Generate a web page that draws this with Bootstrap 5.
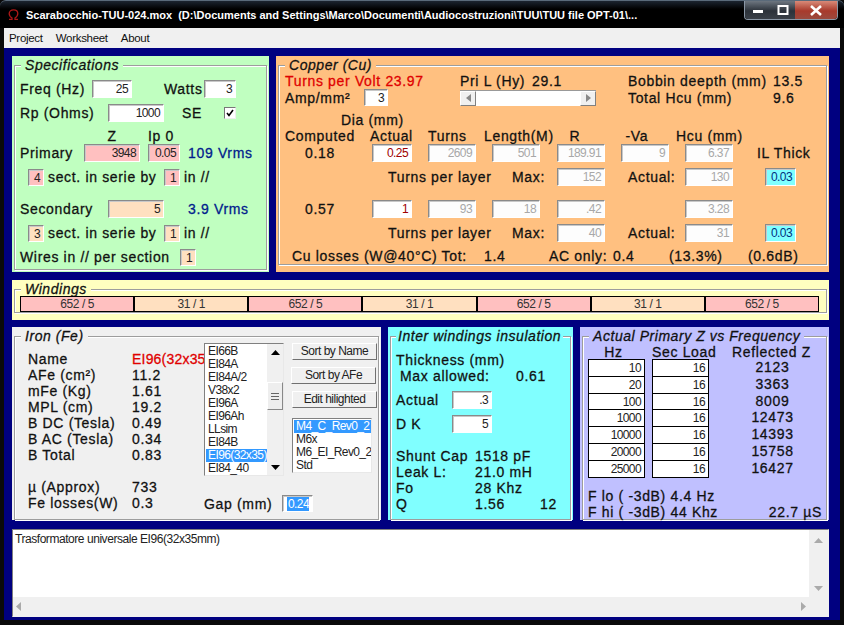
<!DOCTYPE html>
<html lang="it">
<head>
<meta charset="utf-8">
<title>Scarabocchio-TUU</title>
<link href="https://cdn.jsdelivr.net/npm/bootstrap@5.3.0/dist/css/bootstrap.min.css" rel="stylesheet">
<style>
html,body{margin:0;height:625px;overflow:hidden;background:#000}
.appwin{width:844px;height:625px;display:flex;flex-direction:column;background:#0a0a0a;font-family:"Liberation Sans",Arial,sans-serif;font-size:14px;line-height:16px;color:#111;-webkit-text-stroke:.28px currentColor;letter-spacing:.66px}
.titlebar{height:28px;flex:none;background:linear-gradient(#1c2430,#000 30%);border-top:1px solid #5a6a7a;border-radius:6px 6px 0 0;color:#fff;font-size:11px;font-weight:700;letter-spacing:0;white-space:pre;-webkit-text-stroke:0;padding-left:8px}
.capicon{width:11px;height:11px;margin-right:7px}
.capbtns{margin-left:auto;margin-right:6px;align-self:flex-start;width:94px;height:19px;display:flex;border:1px solid #8a97a6;border-top:0;border-radius:0 0 4px 4px;overflow:hidden}
.capbtns span{flex:1;display:flex;align-items:center;justify-content:center;background:linear-gradient(#6d7680,#2c323a 55%,#3a4048)}
.capbtns .xbtn{flex:1.65;background:linear-gradient(#d98a78,#a83a2c 55%,#9a4a3e)}
.menubar{height:20px;flex:none;background:#f0f0f0;margin:0 4px;font-size:11.5px;letter-spacing:-.3px;-webkit-text-stroke:0;padding-left:5px;gap:13px}
.client{flex:1;margin:0 4px 5px;background:#000080;padding:8px 11px 3px 8px;display:flex;flex-direction:column}
.panel{flex:none}
.fs{margin:1px 2px 2px;padding:0;min-width:0;border:1px solid #9d9d9d;box-shadow:inset 1px 1px 0 #fff,1px 1px 0 #fff}
.fs.low{height:calc(100% - 1px);margin-bottom:0}
.fs legend{float:none;width:auto;max-width:none;margin:0 0 0 6px;padding:0 4px;font-size:14px;line-height:16px;font-style:italic;font-weight:400;letter-spacing:.55px;white-space:nowrap;background:var(--pc)}
.p-green{--pc:#c0ffc0;background:#c0ffc0;width:257px;height:216px}
.p-orange{--pc:#ffc080;background:#ffc080;width:553px;height:216px;margin-left:7px}
.p-yellow{--pc:#ffffc0;background:#ffffc0;width:817px;height:40px;margin-top:8px}
.p-gray{--pc:#f0f0f0;background:#f0f0f0;width:369px;height:193px}
.p-cyan{--pc:#80ffff;background:#80ffff;width:185px;height:193px;margin-left:7px}
.p-lilac{--pc:#c0c0ff;background:#c0c0ff;width:249px;height:193px;margin-left:7px}
.p-cyan .fs legend{margin-left:5px;padding:0 2px}
.lowrow{margin-top:7px}
.specbody{padding:4px 0 0 5px}
.copbody{padding-left:6px}
.ln{display:flex;align-items:center;height:24px;white-space:nowrap}
.ln.hd{height:16px;margin:3px 0 -3px}
.gapb{margin-top:8px}
.fld{display:block;flex:none;height:18px;background:#fff;border:1px solid;border-color:#8a8a8a #fff #fff #8a8a8a;box-shadow:inset 1px 1px 0 #c8c8c8;text-align:right;padding:0 3px 0 0;font-size:12px;line-height:17px;letter-spacing:-.6px;-webkit-text-stroke:0;color:#222}
.fld.h17{height:17px;line-height:16px}
.pink{background:#ffc0c0}
.peach{background:#ffe0c0}
.dim{color:#a8a8a8;background:#fdfdfd}
.maroon{color:#a00000}
.ilf{background:#80ffff;color:#003080}
.red{color:#e00000}
.tight{letter-spacing:.2px}
.navy{color:#00208c}
.w12{width:12px}.w16{width:16px}.w24{width:24px}.w31{width:31px}.w32{width:32px}.w40{width:40px}.w42{width:42px}.w48{width:48px}.w56{width:56px}.w64{width:64px}.w65{width:65px}.w72{width:72px}.w78{width:78px}.w79{width:79px}.w85{width:85px}.w88{width:88px}.w96{width:96px}.w104{width:104px}.w112{width:112px}.w145{width:145px}.w160{width:160px}.w175{width:175px}.w192{width:192px}
.l1{margin-left:1px}.l4{margin-left:4px}.l7{margin-left:7px}.l8{margin-left:8px}.l18{margin-left:18px}.l24{margin-left:24px}.l32{margin-left:32px}.l64{margin-left:64px}.l72{margin-left:72px}
.n2{margin-left:-2px}.n8{margin-left:-8px}.n9{margin-left:-9px}
.ck{width:12px;height:12px;background:#fff;border:1px solid;border-color:#777 #eee #eee #777;display:flex;align-items:center;justify-content:center}
.toprow{height:16px}
.toprow2{height:17px}
.sbar{width:136px;height:16px;background:#fff;border-top:1px solid #999;display:flex;justify-content:space-between}
.sbtn{width:16px;height:15px;background:#f0f0f0;border:1px solid;border-color:#fff #808080 #808080 #fff;display:flex;align-items:center;justify-content:center}
.cgrid{display:grid;grid-template-columns:87px 56px 64px 65px 64px 64px 80px 1fr;align-items:center;white-space:nowrap;height:18px}
.cgrid.h16{height:16px}
.dia{height:16px;padding-left:56px;margin-top:6px}
.mt6{margin-top:6px}.mt12{margin-top:12px}.mt14{margin-top:14px}
.tpl{grid-column:2 / span 3;display:flex;justify-content:space-between;padding:0 12px 0 16px}
.cen{text-align:center}
.pr6{padding-right:6px}
.pl7{padding-left:7px}.pl8{padding-left:8px}.pl20{padding-left:20px}
.wgrid{display:flex;margin:-1px 0 0 5px;width:799px}
.wcell{flex:0 0 114.2px;height:16px;border:1px solid #000;margin-right:-.05px;text-align:center;font-size:12px;line-height:14px;letter-spacing:-.4px;-webkit-text-stroke:0;color:#333}
.ironbody{display:flex}
.ironleft{width:176px;margin-left:13px;padding-top:7px;overflow:hidden;flex:none}
.ln16{display:flex;height:16px;align-items:center;white-space:nowrap}
.ln16>span{flex:none}
.mt16{margin-top:16px}
.ironright{flex:none;margin-top:-1px}
.lb{height:133px;width:80px;border:1px solid;border-color:#808080 #e8e8e8 #e8e8e8 #808080;background:#fff;display:flex;border-radius:0;flex:none;overflow:hidden}
.lbitems{flex:1;padding:1px 0 0 1px;min-width:0}
.lbi,.list-group-item.lbi{border:0;border-radius:0;background:transparent;padding:0 0 0 2px;font-size:12px;line-height:13px;height:13px;letter-spacing:-.6px;-webkit-text-stroke:0;color:#222;white-space:nowrap}
.list-group-item.lbi.active{background:#3399ff;color:#fff;margin-top:0}
.vsb{width:16px;display:flex;flex-direction:column;background:#f0f0f0;flex:none}
.varr{height:16px;display:flex;align-items:center;justify-content:center;flex:none}
.thumb{height:28px;margin-top:22px;background:#eee;border:1px solid;border-color:#fff #888 #888 #fff;display:flex;align-items:center;justify-content:center;flex:none}
.btnvb.btn{width:85px;height:17px;padding:0;background:#f0f0f0;border:1px solid;border-color:#fff #707070 #707070 #fff;border-radius:0;font-size:12px;line-height:15px;letter-spacing:-.5px;-webkit-text-stroke:0;color:#222;display:block}
.btncol{display:flex;flex-direction:column;gap:7px;margin-left:7px;align-items:flex-start}
.lb2{height:55px;width:80px;margin-top:3px;margin-left:1px;padding:0}
.gaprow{height:17px;margin-top:19px}
.sel{background:#3399ff;color:#fff;padding:0 0 0 1px}
.insbody{padding:8px 0 0 5px}
.zbody{margin-left:5px}
.zhead{display:grid;grid-template-columns:57px 7px 57px 117px;height:16px;white-space:nowrap}
.ztab{display:grid;grid-template-columns:57px 7px 57px 117px}
.zc{height:17.8px;background:#fff;border:1px solid #000;margin-top:-1px;text-align:right;padding-right:3px;font-size:12px;line-height:16px;letter-spacing:-.6px;-webkit-text-stroke:0;color:#222}
.zgap{height:16px}
.zr{text-align:center;height:16px;line-height:15px;padding-left:10px}
.zfoot{margin-top:10px}
.memo{flex:none;height:88px;margin-top:9px;background:#f0f0f0;border:1px solid;border-color:#808080 #f0f0f0 #f0f0f0 #808080;display:grid;grid-template-columns:1fr 19px;grid-template-rows:1fr 19px;font-size:12px;letter-spacing:-.45px;-webkit-text-stroke:0;color:#222}
.memotext{background:#fff;padding:1px 2px;line-height:16px}
.memov{display:flex;flex-direction:column;justify-content:space-between;align-items:center;padding:8px 0 6px}
.memoh{display:flex;justify-content:space-between;align-items:center;padding:0 3px}
</style>
</head>
<body>
<div class="appwin">
  <div class="titlebar d-flex align-items-center">
    <svg class="capicon" viewBox="0 0 11 11"><path d="M1 10.500h3V9C2.200 8 1.200 6.500 1.200 4.600 1.200 2.400 3 .8 5.500.8s4.300 1.600 4.300 3.800C9.800 6.500 8.800 8 7 9v1.500h3" fill="none" stroke="#b01818" stroke-width="1.300"/></svg>
    <span>Scarabocchio-TUU-024.mox  (D:\Documents and Settings\Marco\Documenti\Audiocostruzioni\TUU\TUU file OPT-01\...</span>
    <div class="capbtns">
      <span><svg width="12" height="6" viewBox="0 0 12 6"><rect x="1" y="3" width="10" height="3" fill="#fff"/></svg></span>
      <span><svg width="12" height="10" viewBox="0 0 12 10"><rect x="1.500" y="1" width="9" height="8" fill="none" stroke="#fff" stroke-width="2"/></svg></span>
      <span class="xbtn"><svg width="14" height="11" viewBox="0 0 14 11"><path d="M2 1l10 9M12 1L2 10" stroke="#fff" stroke-width="2.600"/></svg></span>
    </div>
  </div>
  <nav class="menubar d-flex align-items-center"><span>Project</span><span>Worksheet</span><span>About</span></nav>
  <main class="client">
    <div class="d-flex">
      <section class="panel p-green">
        <fieldset class="fs"><legend>Specifications</legend>
          <div class="specbody">
            <div class="ln"><span class="w72">Freq (Hz)</span><span class="fld w40">25</span><span class="l32 w40">Watts</span><span class="fld w32">3</span></div>
            <div class="ln"><span class="w88">Rp (Ohms)</span><span class="fld w56">1000</span><span class="l18 w42">SE</span><span class="ck"><svg width="8" height="8" viewBox="0 0 8 8"><path d="M1 4l2 2.500L7 1" fill="none" stroke="#000" stroke-width="1.600"/></svg></span></div>
            <div class="ln hd"><span class="l64 w56 cen">Z</span><span class="l8 w32">Ip 0</span></div>
            <div class="ln"><span class="w64">Primary</span><span class="fld w56 pink">3948</span><span class="fld w32 l8 pink">0.05</span><span class="l8 navy">109 Vrms</span></div>
            <div class="ln"><span class="fld w16 l8 pink h17">4</span><span class="l4 w112">sect. in serie by</span><span class="fld w16 l4 pink h17">1</span><span class="l4">in //</span></div>
            <div class="ln gapb"><span class="w88">Secondary</span><span class="fld w56 peach">5</span><span class="l24 navy">3.9 Vrms</span></div>
            <div class="ln"><span class="fld w16 l8 peach h17">3</span><span class="l4 w112">sect. in serie by</span><span class="fld w16 l4 peach h17">1</span><span class="l4">in //</span></div>
            <div class="ln"><span class="w160">Wires in // per section</span><span class="fld w16 peach h17">1</span></div>
          </div>
        </fieldset>
      </section>
      <section class="panel p-orange">
        <fieldset class="fs"><legend>Copper (Cu)</legend>
          <div class="copbody">
            <div class="d-flex align-items-center toprow text-nowrap">
              <span class="w175 red">Turns per Volt 23.97</span><span class="w72">Pri L (Hy)</span><span class="w96">29.1</span><span class="w145">Bobbin deepth (mm)</span><span>13.5</span>
            </div>
            <div class="d-flex align-items-center toprow2 text-nowrap">
              <span class="w79">Amp/mm²</span><span class="fld w24 h17">3</span><span class="l72 sbar"><span class="sbtn"><svg width="5" height="8" viewBox="0 0 5 8"><path d="M5 0v8L0 4z" fill="#888"/></svg></span><span class="sbtn"><svg width="5" height="8" viewBox="0 0 5 8"><path d="M0 0v8l5-4z" fill="#888"/></svg></span></span><span class="w145 l32">Total Hcu (mm)</span><span>9.6</span>
            </div>
            <div class="dia">Dia (mm)</div>
            <div class="cgrid h16"><span>Computed</span><span class="n2">Actual</span><span>Turns</span><span class="n8">Length(M)</span><span class="l8">&nbsp;R</span><span>&nbsp;-Va</span><span class="n9">Hcu (mm)</span></div>
            <div class="cgrid"><span class="pl20">0.18</span><span class="fld w40 maroon">0.25</span><span class="fld w48 dim">2609</span><span class="fld w48 dim">501</span><span class="fld w48 dim">189.91</span><span class="fld w48 dim">9</span><span class="fld w48 dim">6.37</span><span class="n8">IL Thick</span></div>
            <div class="cgrid mt6"><span></span><span class="tpl"><span>Turns per layer</span><span>Max:</span></span><span class="fld w48 dim">152</span><span class="pl7">Actual:</span><span class="fld w48 dim">130</span><span class="fld w31 ilf">0.03</span></div>
            <div class="cgrid mt14"><span class="pl20">0.57</span><span class="fld w40 maroon">1</span><span class="fld w48 dim">93</span><span class="fld w48 dim">18</span><span class="fld w48 dim">.42</span><span></span><span class="fld w48 dim">3.28</span></div>
            <div class="cgrid mt6"><span></span><span class="tpl"><span>Turns per layer</span><span>Max:</span></span><span class="fld w48 dim">40</span><span class="pl7">Actual:</span><span class="fld w48 dim">31</span><span class="fld w31 ilf">0.03</span></div>
            <div class="d-flex align-items-center text-nowrap mt6"><span class="l7 w192">Cu losses (W@40°C) Tot:</span><span class="w65">1.4</span><span class="w64">AC only:</span><span class="w56">0.4</span><span class="w79">(13.3%)</span><span>(0.6dB)</span></div>
          </div>
        </fieldset>
      </section>
    </div>
    <section class="panel p-yellow">
      <fieldset class="fs"><legend>Windings</legend>
        <div class="wgrid">
          <div class="wcell pink">652 / 5</div><div class="wcell peach">31 / 1</div><div class="wcell pink">652 / 5</div><div class="wcell peach">31 / 1</div><div class="wcell pink">652 / 5</div><div class="wcell peach">31 / 1</div><div class="wcell pink">652 / 5</div>
        </div>
      </fieldset>
    </section>
    <div class="d-flex lowrow">
      <section class="panel p-gray">
        <fieldset class="fs low"><legend>Iron (Fe)</legend>
          <div class="ironbody">
            <div class="ironleft">
              <div class="ln16"><span class="w104">Name</span><span class="red tight">EI96(32x35</span></div>
              <div class="ln16"><span class="w104">AFe (cm²)</span><span>11.2</span></div>
              <div class="ln16"><span class="w104">mFe (Kg)</span><span>1.61</span></div>
              <div class="ln16"><span class="w104">MPL (cm)</span><span>19.2</span></div>
              <div class="ln16"><span class="w104">B DC (Tesla)</span><span>0.49</span></div>
              <div class="ln16"><span class="w104">B AC (Tesla)</span><span>0.34</span></div>
              <div class="ln16"><span class="w104">B Total</span><span>0.83</span></div>
              <div class="ln16 mt16"><span class="w104">µ (Approx)</span><span>733</span></div>
              <div class="ln16"><span class="w104">Fe losses(W)</span><span>0.3</span></div>
            </div>
            <div class="ironright">
              <div class="d-flex">
                <div class="lb">
                  <ul class="list-group lbitems">
                    <li class="list-group-item lbi">EI66B</li><li class="list-group-item lbi">EI84A</li><li class="list-group-item lbi">EI84A/2</li><li class="list-group-item lbi">V38x2</li><li class="list-group-item lbi">EI96A</li><li class="list-group-item lbi">EI96Ah</li><li class="list-group-item lbi">LLsim</li><li class="list-group-item lbi">EI84B</li><li class="list-group-item lbi active">EI96(32x35)</li><li class="list-group-item lbi">EI84_40</li>
                  </ul>
                  <div class="vsb">
                    <span class="varr"><svg width="9" height="5" viewBox="0 0 9 5"><path d="M0 5h9L4.500 0z"/></svg></span>
                    <span class="thumb"><svg width="8" height="7" viewBox="0 0 8 7"><path d="M0 .5h8M0 3.500h8M0 6.500h8" stroke="#666"/></svg></span>
                    <span class="varr mt-auto"><svg width="9" height="5" viewBox="0 0 9 5"><path d="M0 0h9L4.500 5z"/></svg></span>
                  </div>
                </div>
                <div class="btncol">
                  <button type="button" class="btn btnvb l1">Sort by Name</button>
                  <button type="button" class="btn btnvb">Sort by AFe</button>
                  <button type="button" class="btn btnvb l1">Edit hilighted</button>
                  <div class="lb lb2">
                    <ul class="list-group lbitems">
                      <li class="list-group-item lbi active">M4_C_Rev0_2</li><li class="list-group-item lbi">M6x</li><li class="list-group-item lbi">M6_EI_Rev0_2</li><li class="list-group-item lbi">Std</li>
                    </ul>
                  </div>
                </div>
              </div>
              <div class="d-flex align-items-center gaprow text-nowrap"><span class="w78">Gap (mm)</span><span class="fld w31 h17"><span class="sel">0.24</span></span></div>
            </div>
          </div>
        </fieldset>
      </section>
      <section class="panel p-cyan">
        <fieldset class="fs low"><legend>Inter windings insulation</legend>
          <div class="insbody">
            <div class="ln16">Thickness (mm)</div>
            <div class="ln16"><span class="w112 l4">Max allowed:</span><span class="l4">0.61</span></div>
            <div class="ln mt-1"><span class="w56">Actual</span><span class="fld w40">.3</span></div>
            <div class="ln"><span class="w56">D K</span><span class="fld w40">5</span></div>
            <div class="ln16 mt12"><span class="w79">Shunt Cap</span><span>1518 pF</span></div>
            <div class="ln16"><span class="w79">Leak L:</span><span>21.0 mH</span></div>
            <div class="ln16"><span class="w79">Fo</span><span>28 Khz</span></div>
            <div class="ln16"><span class="w79">Q</span><span class="w65">1.56</span><span>12</span></div>
          </div>
        </fieldset>
      </section>
      <section class="panel p-lilac">
        <fieldset class="fs low"><legend>Actual Primary Z vs Frequency</legend>
          <div class="zbody">
            <div class="zhead"><span class="cen pr6">Hz</span><span></span><span class="cen pr6">Sec Load</span><span class="cen pl8">Reflected Z</span></div>
            <div class="ztab">
              <span class="zc">10</span><span class="zgap"></span><span class="zc">16</span><span class="zr">2123</span>
              <span class="zc">20</span><span class="zgap"></span><span class="zc">16</span><span class="zr">3363</span>
              <span class="zc">100</span><span class="zgap"></span><span class="zc">16</span><span class="zr">8009</span>
              <span class="zc">1000</span><span class="zgap"></span><span class="zc">16</span><span class="zr">12473</span>
              <span class="zc">10000</span><span class="zgap"></span><span class="zc">16</span><span class="zr">14393</span>
              <span class="zc">20000</span><span class="zgap"></span><span class="zc">16</span><span class="zr">15758</span>
              <span class="zc">25000</span><span class="zgap"></span><span class="zc">16</span><span class="zr">16427</span>
            </div>
            <div class="ln16 zfoot">F lo ( -3dB) 4.4 Hz</div>
            <div class="ln16 justify-content-between pe-1"><span>F hi ( -3dB) 44 Khz</span><span>22.7 µS</span></div>
          </div>
        </fieldset>
      </section>
    </div>
    <section class="memo">
      <div class="memotext">Trasformatore universale EI96(32x35mm)</div>
      <div class="memov"><svg width="9" height="5" viewBox="0 0 9 5"><path d="M0 5h9L4.500 0z" fill="#aaa"/></svg><svg width="9" height="5" viewBox="0 0 9 5"><path d="M0 0h9L4.500 5z" fill="#aaa"/></svg></div>
      <div class="memoh"><svg width="5" height="9" viewBox="0 0 5 9"><path d="M5 0v9L0 4.500z" fill="#aaa"/></svg><svg width="5" height="9" viewBox="0 0 5 9"><path d="M0 0v9l5-4.500z" fill="#aaa"/></svg></div>
      <div></div>
    </section>
  </main>
</div>
<script src="https://cdn.jsdelivr.net/npm/bootstrap@5.3.0/dist/js/bootstrap.bundle.min.js"></script>
</body>
</html>
